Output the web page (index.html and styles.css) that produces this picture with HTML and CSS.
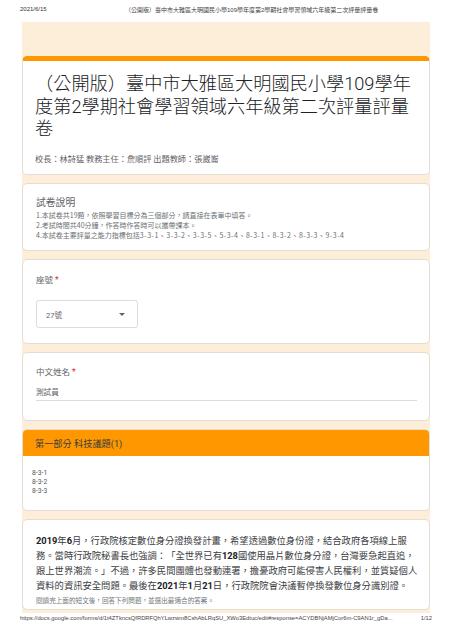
FILE: index.html
```html
<!DOCTYPE html>
<html lang="zh-Hant">
<head>
<meta charset="utf-8">
<title>form</title>
<link rel="stylesheet" href="styles.css">
</head>
<body>
<header class="print-head">
  <span class="ph-date">2021/6/15</span>
  <span class="ph-title">（公開版）臺中市大雅區大明國民小學109學年度第2學期社會學習領域六年級第二次評量評量卷</span>
</header>
<main class="sheet">
  <section class="card title-card">
    <h1 class="form-title">（公開版）臺中市大雅區大明國民小學109學年度第2學期社會學習領域六年級第二次評量評量卷</h1>
    <p class="form-sub">校長：林詩猛 教務主任：詹順評 出題教師：張崴崙</p>
  </section>
  <section class="card desc-card">
    <h2 class="desc-title">試卷說明</h2>
    <p class="desc-line">1.本試卷共19題，依照學習目標分為三個部分，請直接在表單中填答。</p>
    <p class="desc-line">2.考試時間共40分鐘，作答時作答時可以攜帶課本。</p>
    <p class="desc-line">4.本試卷主要評量之能力指標包括<span class="codes">3-3-1、3-3-2、3-3-5、5-3-4、8-3-1、8-3-2、8-3-3、9-3-4</span></p>
  </section>
  <section class="card q-card seat">
    <div class="q-label">座號 <span class="req">*</span></div>
    <div class="select">
      <span>27號</span>
      <span class="caret"></span>
    </div>
  </section>
  <section class="card q-card name">
    <div class="q-label">中文姓名 <span class="req">*</span></div>
    <div class="answer">測試員</div>
  </section>
  <section class="card section-card">
    <div class="section-head">第一部分 科技議題(1)</div>
    <div class="section-body">
      <p>8-3-1</p>
      <p>8-3-2</p>
      <p>8-3-3</p>
    </div>
  </section>
  <section class="card passage-card">
    <p class="passage"><b>2019</b>年<b>6</b>月，行政院核定數位身分證換發計畫，希望透過數位身份證，結合政府各項線上服務。當時行政院秘書長也強調：「全世界已有<b>128</b>國使用晶片數位身分證，台灣要急起直追，跟上世界潮流。」不過，許多民間團體也發動連署，擔憂政府可能侵害人民權利，並質疑個人資料的資訊安全問題。最後在<b>2021</b>年<b>1</b>月<b>21</b>日，行政院院會決議暫停換發數位身分識別證。</p>
    <p class="passage-note">閱讀完上面的短文後，回答下列問題，並選出最適合的答案。</p>
  </section>
</main>
<footer class="print-foot">
  <span class="pf-url">https://docs.google.com/forms/d/1t4ZTkncsQfRDRFQhYLwzwm8CshAbLRqSU_XWo3Edtuc/edit#response=ACYDBNjAMjCor6m-C9AN1r_gDa...</span>
  <span class="pf-page">1/12</span>
</footer>
</body>
</html>
```

FILE: styles.css
```css
* { box-sizing: border-box; }
html, body { margin: 0; padding: 0; background: #fff; }
body {
  width: 452px;
  height: 640px;
  overflow: hidden;
  font-family: Roboto, "Noto Sans CJK TC", sans-serif;
  color: #202124;
  text-spacing-trim: space-all;
}
p, h1, h2 { margin: 0; }

.print-head {
  height: 22px;
  display: flex;
  align-items: center;
  padding: 0 20px 4px 20px;
  font-family: "Liberation Sans", "Noto Sans CJK TC", sans-serif;
  font-size: 6px;
  color: #333;
}
.ph-date { width: 105px; }
.ph-title { font-size: 6px; color: #444; }

.sheet {
  margin: 0 22px;
  height: 591px;
  background: #fdeeda;
  padding-top: 34px;
  display: flex;
  flex-direction: column;
  gap: 8px;
}

.card {
  background: #fff;
  border: 1px solid #e4ddd3;
  border-radius: 5px;
  flex: none;
}

.title-card {
  border-top: 5px solid #ff9800;
  padding: 12px 13px 0 12px;
  height: 119px;
}
.form-title {
  font-weight: 300;
  font-size: 18.2px;
  line-height: 22.5px;
  color: #202124;
}
.form-sub {
  margin-top: 12px;
  font-family: "Noto Sans CJK TC", sans-serif;
  font-size: 8.2px;
  line-height: 10px;
  color: #5f6368;
}

.desc-card {
  height: 68px;
  padding: 12px 13px 0 13px;
}
.desc-title {
  font-weight: 400;
  font-size: 9.8px;
  line-height: 14px;
  color: #5f6368;
}
.desc-line {
  font-family: "Noto Sans CJK TC", sans-serif;
  font-size: 7px;
  line-height: 10px;
  color: #6b6f73;
}
.codes { letter-spacing: 0.5px; }

.q-card { padding: 14px 13px 0 13px; }
.seat { height: 85px; }
.name { height: 69px; padding-top: 13px; }
.q-label {
  font-size: 8.5px;
  line-height: 12px;
  color: #5f6368;
}
.req { color: #d93025; }

.select {
  margin-top: 14px;
  width: 102px;
  height: 28px;
  border: 1px solid #dadce0;
  border-radius: 3px;
  display: flex;
  align-items: center;
  justify-content: space-between;
  padding: 0 12px 0 9px;
  font-size: 7.5px;
  color: #5f6368;
}
.caret {
  width: 0;
  height: 0;
  border-left: 3px solid transparent;
  border-right: 3px solid transparent;
  border-top: 3px solid #5f6368;
}

.answer {
  margin-top: 8px;
  width: 381px;
  height: 15px;
  border-bottom: 1px solid #dadce0;
  font-size: 7.6px;
  line-height: 14px;
  color: #5f6368;
}

.section-card { height: 82px; overflow: hidden; }
.section-head {
  height: 27px;
  background: #ff9800;
  padding-left: 13px;
  display: flex;
  align-items: center;
  font-size: 9.2px;
  color: #3c3c3c;
  margin: -1px -1px 0 -1px;
  border-radius: 5px 5px 0 0;
}
.section-body {
  padding: 13px 9px 0 9px;
}
.section-body p {
  font-size: 6.8px;
  line-height: 9px;
  color: #555;
}

.passage-card {
  height: 91px;
  padding: 13px 8px 0 13px;
}
.passage {
  font-size: 9.3px;
  line-height: 15px;
  color: #3c4043;
}
.passage b { font-weight: 700; color: #202124; }
.passage-note {
  font-family: "Noto Sans CJK TC", sans-serif;
  font-size: 6.6px;
  line-height: 14px;
  color: #70757a;
}

.print-foot {
  display: flex;
  justify-content: space-between;
  padding: 0 20px;
  height: 10px;
  align-items: center;
  font-family: "Liberation Sans", sans-serif;
  font-size: 5.8px;
  color: #444;
}
```
